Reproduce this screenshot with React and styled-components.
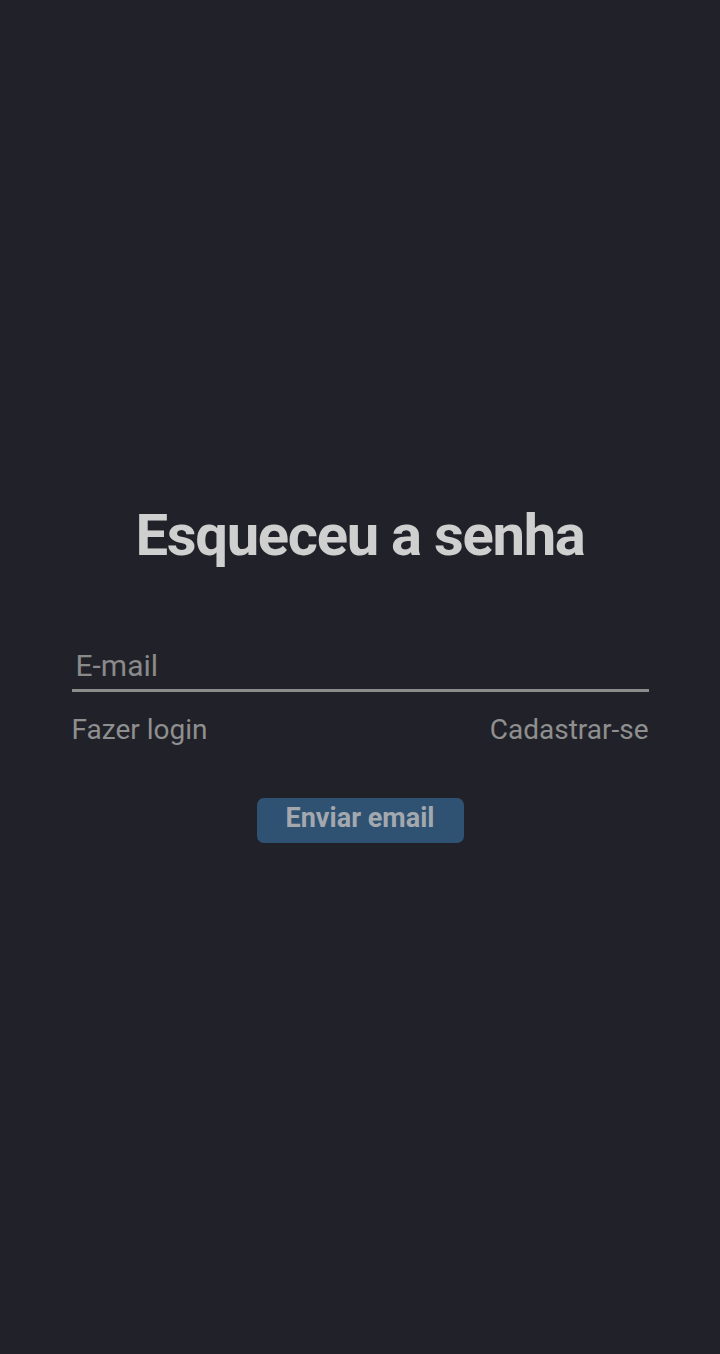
import React from "react";
import styled, { createGlobalStyle } from "styled-components";

const Global = createGlobalStyle`
  html, body { margin: 0; padding: 0; background: #212229; }
  body { font-family: Roboto, "Liberation Sans", sans-serif; }
`;

const Page = styled.main`
  min-height: 1354px;
  display: flex;
  flex-direction: column;
  align-items: center;
  justify-content: center;
  background: #212229;
  box-sizing: border-box;
  padding-bottom: 6px;
`;

const Form = styled.form`
  width: 577px;
  display: flex;
  flex-direction: column;
  align-items: stretch;
`;

const Title = styled.h1`
  margin: 0 0 80px;
  text-align: center;
  font-size: 58px;
  font-weight: 700;
  color: #cfcfcf;
  letter-spacing: -1.3px;
  line-height: 1;
`;

const Input = styled.input`
  background: transparent;
  border: none;
  border-bottom: 3px solid #8c8c8c;
  outline: none;
  font-family: Roboto, sans-serif;
  font-size: 30px;
  color: #cfcfcf;
  padding: 4px 4px 6px;
  &::placeholder { color: #8a8a8a; }
`;

const Links = styled.div`
  display: flex;
  justify-content: space-between;
  margin-top: 21px;
`;

const Link = styled.a`
  font-size: 28px;
  color: #8f8f8f;
  text-decoration: none;
  cursor: pointer;
`;

const Button = styled.button`
  align-self: center;
  margin-top: 52px;
  width: 207px;
  height: 45px;
  border: none;
  border-radius: 7px;
  background: #2f5273;
  color: #a3a8ae;
  font-family: Roboto, sans-serif;
  font-weight: 700;
  font-size: 27px;
  padding: 0 0 4px;
`;

export default function App() {
  return (
    <>
      <Global />
      <Page>
        <Form onSubmit={(e) => e.preventDefault()}>
          <Title>Esqueceu a senha</Title>
          <Input type="email" placeholder="E-mail" />
          <Links>
            <Link>Fazer login</Link>
            <Link>Cadastrar-se</Link>
          </Links>
          <Button type="submit">Enviar email</Button>
        </Form>
      </Page>
    </>
  );
}
